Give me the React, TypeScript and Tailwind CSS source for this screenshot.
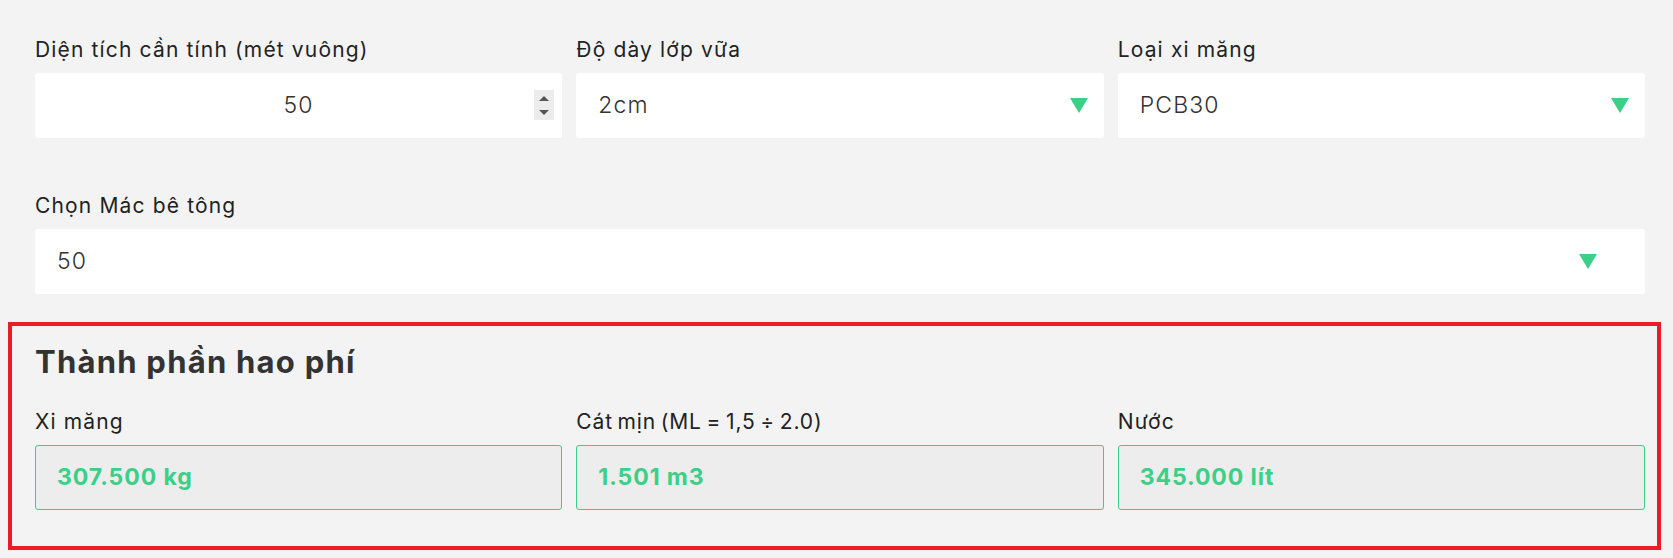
const Arrow = ({ className = "" }: { className?: string }) => (
  <svg width="18" height="15" viewBox="0 0 18 15" className={className}>
    <path d="M0 0H18L9 15Z" fill="#3ccf87" />
  </svg>
);

const Spinner = () => (
  <div className="absolute right-[8px] top-[17px] w-[20px] h-[30px] bg-[#ececec]">
    <svg width="20" height="30" viewBox="0 0 20 30">
      <path d="M5 11H15L10 6Z" fill="#555" />
      <path d="M5 20H15L10 25Z" fill="#555" />
    </svg>
  </div>
);

const Field = ({ label, children }: { label: string; children: React.ReactNode }) => (
  <div className="flex flex-col">
    <label className="text-[21px] leading-[24px] tracking-[0.055em] text-[#222] mb-[11px]">{label}</label>
    {children}
  </div>
);

const SelectBox = ({ value, arrowGap = "mr-[16px]" }: { value: string; arrowGap?: string }) => (
  <div className="h-[65px] bg-white rounded-[3px] flex items-center pl-[22px] text-[23px] tracking-[0.05em] font-light text-[#333]">
    <span className="flex-1">{value}</span>
    <Arrow className={arrowGap} />
  </div>
);

const Result = ({ label, value, tight = false }: { label: string; value: string; tight?: boolean }) => (
  <div className="flex flex-col">
    <span
      className={
        tight
          ? "text-[21px] leading-[24px] tracking-[0.04em] [word-spacing:-2px] text-[#222] mb-[11px]"
          : "text-[21px] leading-[24px] tracking-[0.055em] text-[#222] mb-[11px]"
      }
    >
      {label}
    </span>
    <div className="h-[65px] bg-[#ededed] border border-[#3ccf87] rounded-[3px] flex items-center pl-[21px] text-[23px] tracking-[0.04em] font-bold text-[#3ccf87]">
      {value}
    </div>
  </div>
);

export default function App() {
  return (
    <div className="min-h-[558px] bg-[#f3f3f3] font-['Inter',sans-serif] pt-[38px]">
      <div className="pl-[35px] pr-[28px]">
        <div className="grid grid-cols-3 gap-x-[14px]">
          <Field label="Diện tích cần tính (mét vuông)">
            <div className="relative h-[65px] bg-white rounded-[3px] flex items-center justify-center text-[23px] tracking-[0.05em] font-light text-[#333]">
              50
              <Spinner />
            </div>
          </Field>
          <Field label="Độ dày lớp vữa">
            <SelectBox value="2cm" />
          </Field>
          <Field label="Loại xi măng">
            <SelectBox value="PCB30" />
          </Field>
        </div>
        <div className="mt-[56px]">
          <Field label="Chọn Mác bê tông">
            <SelectBox value="50" arrowGap="mr-[48px]" />
          </Field>
        </div>
      </div>
      <div className="mt-[28px] ml-[8px] mr-[12px] border-4 border-[#ed1c24] pt-[18px] pb-[36px] pl-[23px] pr-[12px]">
        <h2 className="text-[31px] leading-[36px] tracking-[0.04em] font-bold text-[#333] mb-[30px]">Thành phần hao phí</h2>
        <div className="grid grid-cols-3 gap-x-[14px]">
          <Result label="Xi măng" value="307.500 kg" />
          <Result label="Cát mịn (ML = 1,5 ÷ 2.0)" value="1.501 m3" tight />
          <Result label="Nước" value="345.000 lít" />
        </div>
      </div>
    </div>
  );
}
